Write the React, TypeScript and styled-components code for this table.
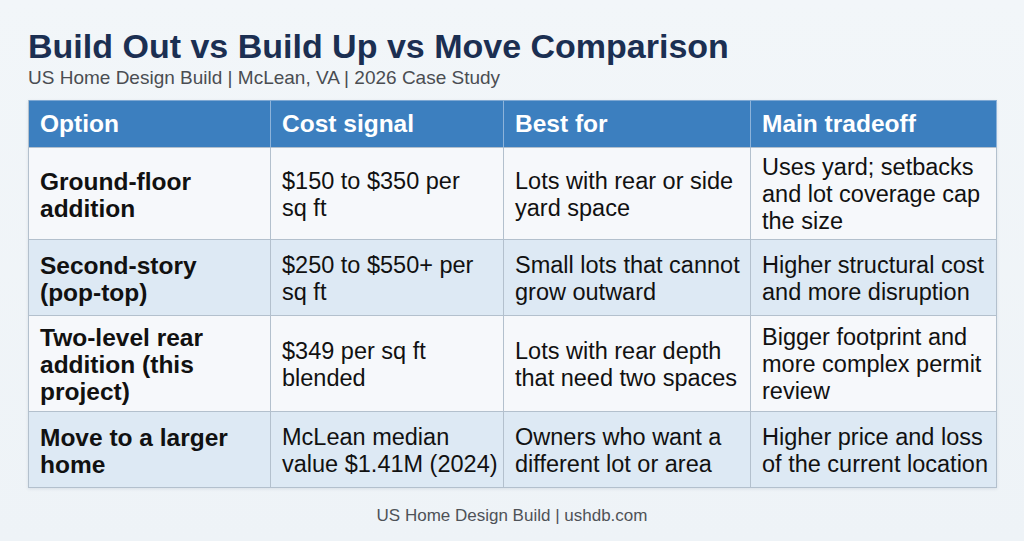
import React from "react";
import styled, { createGlobalStyle } from "styled-components";

const GlobalStyle = createGlobalStyle`
  html, body { margin: 0; padding: 0; }
  body {
    width: 1024px;
    height: 541px;
    overflow: hidden;
    background: linear-gradient(180deg, #f2f6f9 0%, #eef3f7 100%);
    font-family: "Liberation Sans", Arial, sans-serif;
  }
`;

const Page = styled.div`
  box-sizing: border-box;
  width: 1024px;
  height: 541px;
  padding: 26px 28px 0 28px;
  display: flex;
  flex-direction: column;
`;

const Title = styled.h1`
  margin: 0;
  font-size: 34px;
  line-height: 40px;
  font-weight: 700;
  color: #1b2f52;
`;

const Subtitle = styled.div`
  margin-top: 0;
  font-size: 19px;
  line-height: 24px;
  color: #4a4d52;
`;

const Table = styled.div`
  margin-top: 10px;
  width: 968px;
  display: grid;
  grid-template-columns: 242px 233px 247px 246px;
  grid-template-rows: 48px 92px 76px 96px 76px;
  border-left: 1px solid #b3c0cd;
  box-shadow: 0 1px 3px rgba(60, 80, 110, 0.12);
`;

const HeadCell = styled.div`
  box-sizing: border-box;
  display: flex;
  align-items: center;
  padding: 0 11px;
  background: #3c7fbf;
  color: #ffffff;
  font-size: 24.5px;
  font-weight: 700;
  white-space: nowrap;
  border-right: 1px solid #8db3da;
  border-top: 1px solid #7ea8d3;
  border-bottom: 1px solid #b3c0cd;
  &:last-child { border-right: 1px solid #7ea8d3; }
`;

const Cell = styled.div<{ $alt: boolean; $bold?: boolean }>`
  box-sizing: border-box;
  display: flex;
  align-items: center;
  padding: 2px 2px 0 11px;
  background: ${(p) => (p.$alt ? "#dde9f4" : "#f6f8fb")};
  color: #111111;
  font-size: ${(p) => (p.$bold ? "24.5px" : "23.5px")};
  line-height: 27px;
  font-weight: ${(p) => (p.$bold ? 700 : 400)};
  white-space: pre;
  border-right: 1px solid #b3c0cd;
  border-bottom: 1px solid #b3c0cd;
`;

const Footer = styled.div`
  margin-top: 18px;
  text-align: center;
  font-size: 17px;
  line-height: 20px;
  color: #4e5257;
`;

const headers = ["Option", "Cost signal", "Best for", "Main tradeoff"];

const rows: string[][] = [
  [
    "Ground-floor\naddition",
    "$150 to $350 per\nsq ft",
    "Lots with rear or side\nyard space",
    "Uses yard; setbacks\nand lot coverage cap\nthe size",
  ],
  [
    "Second-story\n(pop-top)",
    "$250 to $550+ per\nsq ft",
    "Small lots that cannot\ngrow outward",
    "Higher structural cost\nand more disruption",
  ],
  [
    "Two-level rear\naddition (this\nproject)",
    "$349 per sq ft\nblended",
    "Lots with rear depth\nthat need two spaces",
    "Bigger footprint and\nmore complex permit\nreview",
  ],
  [
    "Move to a larger\nhome",
    "McLean median\nvalue $1.41M (2024)",
    "Owners who want a\ndifferent lot or area",
    "Higher price and loss\nof the current location",
  ],
];

export default function App() {
  return (
    <>
      <GlobalStyle />
      <Page>
        <Title>Build Out vs Build Up vs Move Comparison</Title>
        <Subtitle>US Home Design Build | McLean, VA | 2026 Case Study</Subtitle>
        <Table>
          {headers.map((h) => (
            <HeadCell key={h}>{h}</HeadCell>
          ))}
          {rows.map((r, i) =>
            r.map((c, j) => (
              <Cell key={`${i}-${j}`} $alt={i % 2 === 1} $bold={j === 0}>
                {c}
              </Cell>
            ))
          )}
        </Table>
        <Footer>US Home Design Build | ushdb.com</Footer>
      </Page>
    </>
  );
}
